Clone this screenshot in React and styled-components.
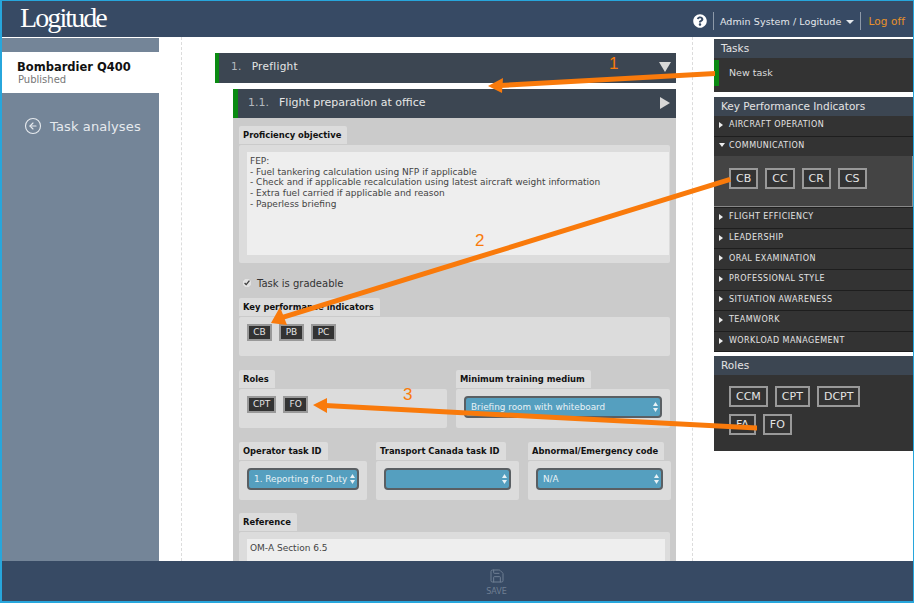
import React from 'react';
import styled, { createGlobalStyle } from 'styled-components';
import { CircleArrowLeft, Save } from 'lucide-react';
import { FaQuestionCircle } from 'react-icons/fa';

const GlobalStyle = createGlobalStyle`
  html, body {
    margin: 0;
    background: #fff;
    overflow: hidden;
  }
  * {
    box-sizing: border-box;
  }
`;

const font = `"DejaVu Sans", Verdana, sans-serif`;

// Page frame
const Frame = styled.div`
  position: relative;
  width: 914px;
  height: 603px;
  border: 2px solid #27a6dc;
  border-top-width: 1px;
  border-right-width: 1px;
  display: flex;
  flex-direction: column;
  font-family: ${font};
  overflow: hidden;
  background: #fff;
`;

const Header = styled.header`
  height: 36px;
  flex: none;
  background: #374a64;
  display: flex;
  align-items: center;
  justify-content: space-between;
  padding: 0 8px 0 18px;
`;

const Logo = styled.div`
  font-family: "Liberation Serif", serif;
  font-size: 28px;
  letter-spacing: -1.9px;
  color: #fff;
  margin-top: -2px;
`;

const UserBar = styled.div`
  display: flex;
  align-items: center;
  gap: 6px;
  padding-top: 4px;
  color: #e4e8ec;
  font-size: 9.5px;
  letter-spacing: 0.1px;
`;

const Divider = styled.span`
  width: 1px;
  height: 18px;
  background: #8d99a8;
`;

const Caret = styled.span`
  width: 0;
  height: 0;
  margin: 2px 0 0 -1px;
  border-left: 4.5px solid transparent;
  border-right: 4.5px solid transparent;
  border-top: 4px solid #e4e8ec;
`;

const LogOff = styled.span`
  color: #e8912a;
  font-size: 10.5px;
  padding-left: 1px;
`;

const Body = styled.div`
  flex: 1;
  min-height: 0;
  display: flex;
  overflow: hidden;
`;

// Left column
const Sidebar = styled.aside`
  width: 157px;
  flex: none;
  background: #748598;
  padding-top: 14px;
  margin-top: 1px;
`;

const AircraftCard = styled.div`
  height: 41px;
  background: #fff;
  padding: 9px 15px;
`;

const AircraftName = styled.div`
  font-size: 11.5px;
  font-weight: 700;
  color: #111;
  line-height: 13px;
`;

const AircraftStatus = styled.div`
  font-size: 10px;
  color: #777;
  line-height: 12px;
  margin-left: 1px;
`;

const BackLink = styled.div`
  display: flex;
  align-items: center;
  gap: 8px;
  margin: 24px 0 0 22px;
  color: #e6eaee;
  font-size: 13px;
  letter-spacing: 0.12px;
`;

// Middle column
const Main = styled.main`
  flex: 1;
  min-width: 0;
  padding: 0 21px 0 22px;
  overflow: hidden;
`;

const Rail = styled.div`
  height: 100%;
  border-left: 1px dashed #dcdcdc;
  border-right: 1px dashed #dcdcdc;
  padding: 16px 16px 0 33px;
`;

const StepBar = styled.div`
  display: flex;
  align-items: center;
  height: ${p => (p.$nested ? 29 : 30)}px;
  background: #3c4652;
  border-left: ${p => (p.$nested ? 5 : 4)}px solid #0a8a12;
  padding: 0 ${p => (p.$nested ? 6 : 5)}px ${p => (p.$nested ? 2 : 4)}px ${p => (p.$nested ? 10 : 12)}px;
  color: #e6e6e6;
  font-size: ${p => (p.$nested ? 11 : 10.5)}px;
  letter-spacing: ${p => (p.$nested ? 0 : 0.3)}px;
`;

const StepNumber = styled.span`
  color: #b4b9bf;
  margin-right: 10px;
`;

const StepTitle = styled.span`
  flex: 1;
`;

const StepToggle = styled.svg`
  margin-top: ${p => (p.$nested ? 0 : 2)}px;
`;

const TaskBlock = styled.section`
  margin: 6px 0 0 18px;
`;

const TaskBody = styled.div`
  background: #cbcbcb;
  padding: 8px 6px 0;
  height: 480px;
`;

const Tab = styled.div`
  width: max-content;
  height: 18px;
  background: #dcdcdc;
  border-radius: 2px 2px 0 0;
  padding: 0 6px 0 4px;
  font-size: 8.4px;
  font-weight: 700;
  line-height: 18px;
  color: #111;
`;

const Panel = styled.div`
  background: #dcdcdc;
  border-radius: 2px;
  margin-top: 1px;
  padding: 7px ${p => p.$pr ?? 8}px 7px 8px;
  height: ${p => p.$h}px;
`;

const TextBlock = styled.textarea`
  display: block;
  width: 100%;
  height: ${p => p.$h}px;
  border: 0;
  border-radius: 0;
  background: #eee;
  padding: 4px 3px 0;
  resize: none;
  overflow: hidden;
  font-family: ${font};
  font-size: 9px;
  line-height: 10.7px;
  color: #444;
`;

const CheckRow = styled.label`
  display: flex;
  align-items: center;
  gap: 6px;
  height: 35px;
  padding: 5px 0 0 4px;
  font-size: 10px;
  color: #333;
`;

const Check = styled.input`
  width: 8px;
  height: 8px;
  margin: 0;
  accent-color: #e2e2e2;
`;

const ChipRow = styled.div`
  display: flex;
  flex-wrap: wrap;
  gap: 7px;
`;

const Chip = styled.span`
  height: ${p => (p.$large ? 21 : 17)}px;
  padding: 0 ${p => (p.$large ? 5 : 4)}px;
  min-width: ${p => (p.$large ? 0 : 25)}px;
  text-align: center;
  background: #333;
  border: 2px solid #999;
  color: #e4e4e4;
  font-size: ${p => (p.$large ? 11 : 9)}px;
  line-height: ${p => (p.$large ? 17 : 13)}px;
`;

const FieldGrid = styled.div`
  display: grid;
  grid-template-columns: ${p => p.$cols};
  gap: 9px;
  margin-top: ${p => p.$top}px;
`;

const SelectWrap = styled.div`
  position: relative;
`;

const Select = styled.select`
  display: block;
  width: 100%;
  height: 22px;
  appearance: none;
  background: #559fbf;
  border: 2px solid #5a5f63;
  border-radius: 4px;
  padding: 0 8px 0 5px;
  color: #e8f2f6;
  font-family: ${font};
  font-size: 8.85px;
`;

const SelectArrows = styled.svg`
  position: absolute;
  right: 4px;
  top: 6px;
  width: 5px;
  height: 10px;
  pointer-events: none;
`;

// Right column
const RightPanel = styled.aside`
  width: 199px;
  flex: none;
  padding-top: 2px;
  display: flex;
  flex-direction: column;
`;

const PanelTitle = styled.div`
  height: 19px;
  background: #3c4652;
  padding-left: 7px;
  color: #e4e4e4;
  font-size: 10.5px;
  line-height: 19px;
`;

const TaskList = styled.div`
  height: 34px;
  background: #333;
  padding-top: 2px;
  margin-bottom: 5px;
`;

const TaskItem = styled.div`
  height: 26px;
  border-left: 5px solid #0a8a12;
  padding-left: 10px;
  color: #ddd;
  font-size: 9.5px;
  line-height: 26px;
`;

const KpiList = styled.div`
  background: #1e1e1e;
  margin-bottom: 4px;
`;

const KpiRow = styled.div`
  display: flex;
  align-items: center;
  gap: 4px;
  height: 19.6px;
  margin-bottom: 1px;
  padding: 0 0 2px 5px;
  background: #333;
  color: #e4e4e4;
  font-size: 8px;
  letter-spacing: 0.45px;
`;

const Triangle = styled.span`
  width: 0;
  height: 0;
  ${p => (p.$open
    ? 'border-left: 3px solid transparent; border-right: 3px solid transparent; border-top: 4px solid #eee;'
    : 'border-top: 3px solid transparent; border-bottom: 3px solid transparent; border-left: 4px solid #eee; margin-right: 2px;')}
`;

const KpiDrawer = styled.div`
  height: 51px;
  background: #444;
  border-right: 1px solid #888;
  border-bottom: 1px solid #888;
  padding: 12px 15px;
  margin-top: -1px;
  margin-bottom: 1px;
`;

const RolesBody = styled.div`
  height: 76px;
  background: #333;
  padding: 11px 50px 11px 15px;
`;

const Footer = styled.footer`
  height: 40px;
  flex: none;
  background: #374a64;
  display: flex;
  flex-direction: column;
  align-items: center;
  padding: 7px 0 0 78px;
  color: #6f7f93;
  font-size: 8px;
  gap: 3px;
`;

// Callouts drawn over the screenshot
const Annotations = styled.svg`
  position: absolute;
  left: -2px;
  top: -1px;
  width: 917px;
  height: 604px;
  pointer-events: none;
`;

const kpis = ['FLIGHT EFFICIENCY', 'LEADERSHIP', 'ORAL EXAMINATION', 'PROFESSIONAL STYLE', 'SITUATION AWARENESS', 'TEAMWORK', 'WORKLOAD MANAGEMENT'];
const objective = `FEP:
- Fuel tankering calculation using NFP if applicable
- Check and if applicable recalculation using latest aircraft weight information
- Extra fuel carried if applicable and reason
- Paperless briefing`;

const Arrows = () => (
  <SelectArrows viewBox="0 0 5 10">
    <path d="M2.5 0 5 4H0zM2.5 10 0 6h5z" fill="#e8f2f6" />
  </SelectArrows>
);

const Dropdown = ({ value }) => (
  <SelectWrap>
    <Select defaultValue={value}>
      <option>{value}</option>
    </Select>
    <Arrows />
  </SelectWrap>
);

const App = () => (
  <>
    <GlobalStyle />
    <Frame>
      <Header>
        <Logo>Logitude</Logo>
        <UserBar>
          <FaQuestionCircle size={14} color="#fff" />
          <Divider />
          <span>Admin System / Logitude</span>
          <Caret />
          <Divider />
          <LogOff>Log off</LogOff>
        </UserBar>
      </Header>
      <Body>
        <Sidebar>
          <AircraftCard>
            <AircraftName>Bombardier Q400</AircraftName>
            <AircraftStatus>Published</AircraftStatus>
          </AircraftCard>
          <BackLink>
            <CircleArrowLeft size={18} strokeWidth={1.5} />
            Task analyses
          </BackLink>
        </Sidebar>
        <Main>
          <Rail>
            <StepBar>
              <StepNumber>1.</StepNumber>
              <StepTitle>Preflight</StepTitle>
              <StepToggle width="12" height="10" viewBox="0 0 12 10"><path d="M0 0h12L6 10z" fill="#d8d8d8" /></StepToggle>
            </StepBar>
            <TaskBlock>
              <StepBar $nested>
                <StepNumber>1.1.</StepNumber>
                <StepTitle>Flight preparation at office</StepTitle>
                <StepToggle $nested width="10" height="12" viewBox="0 0 10 12"><path d="M0 0l10 6-10 6z" fill="#d8d8d8" /></StepToggle>
              </StepBar>
              <TaskBody>
                <Tab>Proficiency objective</Tab>
                <Panel $h={118} $pr={1}>
                  <TextBlock $h={103} readOnly defaultValue={objective} />
                </Panel>
                <CheckRow>
                  <Check type="checkbox" defaultChecked readOnly />
                  Task is gradeable
                </CheckRow>
                <Tab>Key performance indicators</Tab>
                <Panel $h={39}>
                  <ChipRow>
                    <Chip>CB</Chip>
                    <Chip>PB</Chip>
                    <Chip>PC</Chip>
                  </ChipRow>
                </Panel>
                <FieldGrid $cols="208px 214px" $top={14}>
                  <div>
                    <Tab>Roles</Tab>
                    <Panel $h={39}>
                      <ChipRow>
                        <Chip>CPT</Chip>
                        <Chip>FO</Chip>
                      </ChipRow>
                    </Panel>
                  </div>
                  <div>
                    <Tab>Minimum training medium</Tab>
                    <Panel $h={39}>
                      <Dropdown value="Briefing room with whiteboard" />
                    </Panel>
                  </div>
                </FieldGrid>
                <FieldGrid $cols="128px 143px 143px" $top={14}>
                  <div>
                    <Tab>Operator task ID</Tab>
                    <Panel $h={39}>
                      <Dropdown value="1. Reporting for Duty" />
                    </Panel>
                  </div>
                  <div>
                    <Tab>Transport Canada task ID</Tab>
                    <Panel $h={39}>
                      <Dropdown value="" />
                    </Panel>
                  </div>
                  <div>
                    <Tab>Abnormal/Emergency code</Tab>
                    <Panel $h={39}>
                      <Dropdown value="N/A" />
                    </Panel>
                  </div>
                </FieldGrid>
                <FieldGrid $cols="1fr" $top={13}>
                  <div>
                    <Tab>Reference</Tab>
                    <Panel $h={60} $pr={5}>
                      <TextBlock $h={40} readOnly defaultValue="OM-A Section 6.5" />
                    </Panel>
                  </div>
                </FieldGrid>
              </TaskBody>
            </TaskBlock>
          </Rail>
        </Main>
        <RightPanel>
          <PanelTitle>Tasks</PanelTitle>
          <TaskList>
            <TaskItem>New task</TaskItem>
          </TaskList>
          <PanelTitle>Key Performance Indicators</PanelTitle>
          <KpiList>
            <KpiRow><Triangle />AIRCRAFT OPERATION</KpiRow>
            <KpiRow><Triangle $open />COMMUNICATION</KpiRow>
            <KpiDrawer>
              <ChipRow>
                <Chip $large>CB</Chip>
                <Chip $large>CC</Chip>
                <Chip $large>CR</Chip>
                <Chip $large>CS</Chip>
              </ChipRow>
            </KpiDrawer>
            {kpis.map(name => (
              <KpiRow key={name}><Triangle />{name}</KpiRow>
            ))}
          </KpiList>
          <PanelTitle>Roles</PanelTitle>
          <RolesBody>
            <ChipRow>
              <Chip $large>CCM</Chip>
              <Chip $large>CPT</Chip>
              <Chip $large>DCPT</Chip>
              <Chip $large>FA</Chip>
              <Chip $large>FO</Chip>
            </ChipRow>
          </RolesBody>
        </RightPanel>
      </Body>
      <Footer>
        <Save size={16} strokeWidth={1.5} />
        SAVE
      </Footer>
      <Annotations viewBox="0 0 917 604">
        <g fill="#f97a0b" stroke="none">
          <path d="M715 71v5L500 88v-5z" />
          <path d="M488 86 503 78 502 93z" />
          <path d="M729.500 177l1.500 4.800L282.500 320l-1.500-4.800z" />
          <path d="M271 323 280 307 287 325z" />
          <path d="M757 425.500v5L325 408v-5z" />
          <path d="M313 405 327 398 327 413z" />
          <g fontFamily="Liberation Sans, sans-serif" fontSize="17">
            <text x="609" y="69">1</text>
            <text x="475" y="246">2</text>
            <text x="403" y="400">3</text>
          </g>
        </g>
      </Annotations>
    </Frame>
  </>
);

export default App;
